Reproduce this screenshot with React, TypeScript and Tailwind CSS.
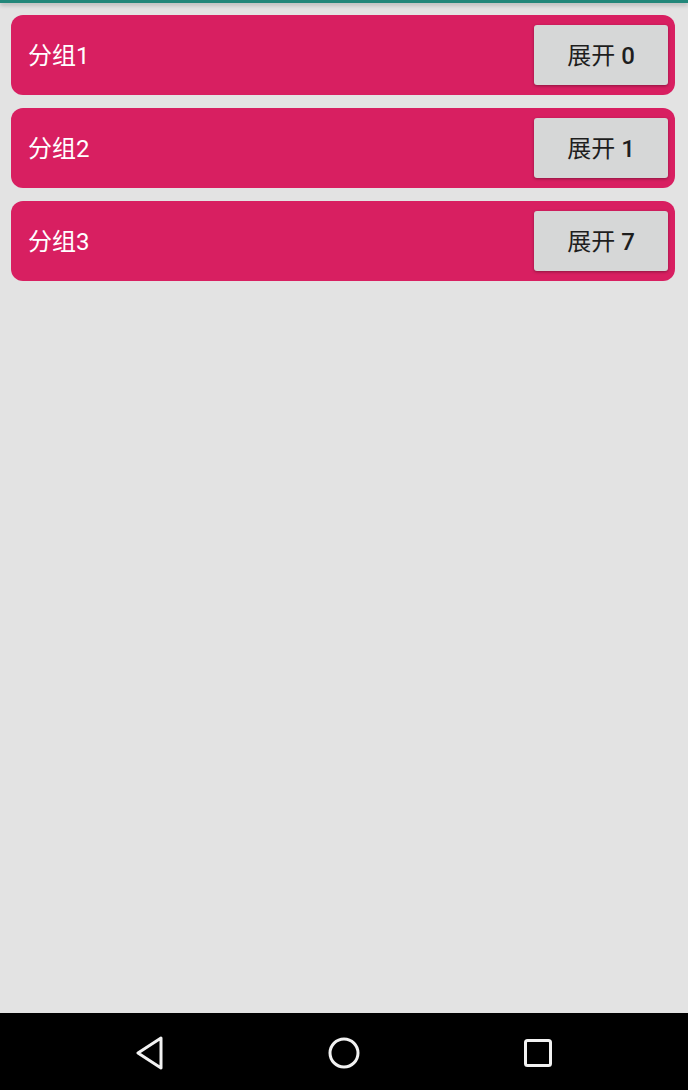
import React from "react";

const groups = [
  { name: "分组1", count: 0 },
  { name: "分组2", count: 1 },
  { name: "分组3", count: 7 },
];

const font = { fontFamily: '"Roboto", "Noto Sans CJK SC", sans-serif' };

export default function App() {
  return (
    <div className="w-[688px] h-[1090px] flex flex-col bg-[#e3e3e3] overflow-hidden" style={font}>
      <div className="h-[3px] bg-[#22877a] shadow-[0_2px_4px_rgba(0,0,0,0.25)] relative z-10" />
      <div className="flex-1 flex flex-col gap-[13px] pt-[12px] pl-[11px]">
        {groups.map((g) => (
          <div
            key={g.name}
            className="w-[664px] h-[80px] rounded-[12px] bg-[#d81f61] flex items-center justify-between pl-[17px] pr-[7px]"
          >
            <span className="text-white text-[24px] leading-none pt-[2px]">{g.name}</span>
            <div className="w-[134px] h-[60px] rounded-[3px] bg-[#d6d7d7] shadow-[0_1px_3px_rgba(0,0,0,0.35)] flex items-center justify-center text-[24px] leading-none text-[#1e1e1e] pt-[2px]">
              <span>展开</span>
              <span className="font-medium ml-[6px]">{g.count}</span>
            </div>
          </div>
        ))}
      </div>
      <div className="h-[77px] bg-black flex items-center justify-between pl-[134px] pr-[135px] pt-[2px]">
        <svg width="30" height="34" viewBox="0 0 30 34">
          <path d="M27 2 L4 17 L27 32 Z" fill="none" stroke="#f2f2f2" strokeWidth="3" strokeLinejoin="round" />
        </svg>
        <svg width="34" height="34" viewBox="0 0 34 34">
          <circle cx="17" cy="17" r="14" fill="none" stroke="#f2f2f2" strokeWidth="3" />
        </svg>
        <svg width="30" height="30" viewBox="0 0 30 30">
          <rect x="2.5" y="2.5" width="25" height="25" rx="2" fill="none" stroke="#f2f2f2" strokeWidth="3" />
        </svg>
      </div>
    </div>
  );
}
